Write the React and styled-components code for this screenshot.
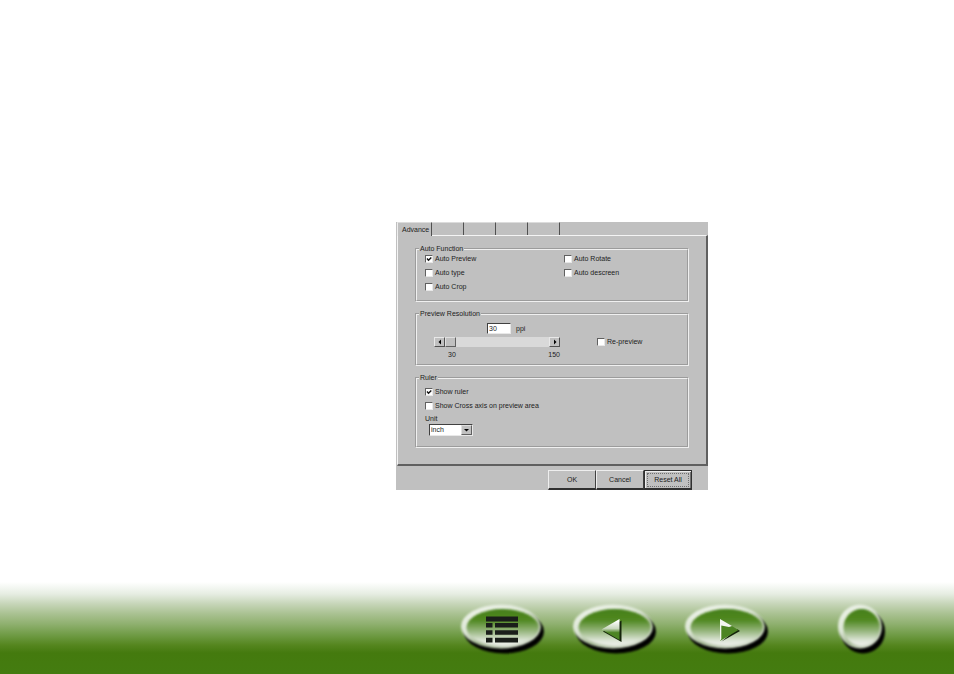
import React, { useState } from 'react';
import styled, { createGlobalStyle } from 'styled-components';

const GlobalStyle = createGlobalStyle`
  * {
    box-sizing: border-box;
  }

  body {
    margin: 0;
    background: #fff;
  }

  button, input, select {
    font: inherit;
    color: inherit;
    margin: 0;
    border-radius: 0;
  }
`;

const Page = styled.div`
  display: flex;
  flex-direction: column;
  min-height: 100vh;
`;

const Main = styled.main`
  flex: 1;
  padding: 222px 16px 16px 396px;
`;

const Dialog = styled.section`
  max-width: 312px;
  padding-left: 1px;
  background: #c0c0c0;
  color: #1c1c1c;
  font-family: 'Liberation Sans', Arial, sans-serif;
  font-size: 7px;
  line-height: 8px;
`;

const Tabs = styled.div`
  display: flex;
  height: 13px;
`;

const Tab = styled.button`
  width: ${({ $active }) => ($active ? '35px' : '32px')};
  height: ${({ $active }) => ($active ? '14px' : '13px')};
  padding: 0 0 0 4px;
  text-align: left;
  background: #c0c0c0;
  border: 0;
  border-top: 1px solid #dcdcdc;
  border-left: ${({ $active }) => ($active ? '1px solid #eee' : '0')};
  border-right: 1px solid #505050;
  position: relative;
`;

const Panel = styled.div`
  display: flex;
  flex-direction: column;
  gap: 8px;
  padding: 9px 17px 16px;
  border-top: 1px solid #f4f4f4;
  border-left: 1px solid #f4f4f4;
  border-right: 2px solid #606060;
  border-bottom: 2px solid #606060;
`;

const Group = styled.fieldset`
  margin: 0;
  min-width: 0;
  padding: ${({ $pad }) => $pad};
  border: 2px groove #f0f0f0;
`;

const Legend = styled.legend`
  padding: 0 1px;
  margin-left: -6px;
`;

const AutoGrid = styled.div`
  display: grid;
  grid-template-columns: 139px 1fr;
  grid-template-rows: repeat(3, 8px);
  grid-auto-flow: column;
  row-gap: 6px;
`;

const CheckLabel = styled.label`
  display: flex;
  align-items: center;
  gap: 2px;
  white-space: nowrap;
`;

const CheckBox = styled.span`
  display: grid;
  width: 8px;
  height: 8px;

  input, svg {
    grid-area: 1 / 1;
    width: 8px;
    height: 8px;
  }

  input {
    appearance: none;
    background: #fff;
    border: 1px solid #e8e8e8;
    border-top-color: #606060;
    border-left-color: #606060;
  }

  svg {
    pointer-events: none;
  }
`;

const ResolutionRow = styled.div`
  display: grid;
  grid-template-columns: 126px 1fr;
  column-gap: 37px;
  padding-left: 9px;
`;

const Resolution = styled.div`
  display: flex;
  flex-direction: column;
`;

const PpiField = styled.label`
  display: flex;
  align-items: center;
  gap: 5px;
  padding-left: 53px;
  margin-bottom: 3px;
`;

const PpiInput = styled.input`
  width: 24px;
  height: 11px;
  padding: 0 0 0 1px;
  background: #fff;
  border: 1px solid #e8e8e8;
  border-top-color: #404040;
  border-left-color: #404040;
`;

const ScrollBar = styled.div`
  display: flex;
  height: 10px;
  background: #d9d9d9;
`;

const ArrowButton = styled.button`
  display: grid;
  place-items: center;
  width: 11px;
  height: 10px;
  padding: 0;
  background: #c0c0c0;
  border: 1px solid #e8e8e8;
  border-right-color: #505050;
  border-bottom-color: #505050;
`;

const Range = styled.input`
  flex: 1;
  min-width: 0;
  height: 10px;
  appearance: none;
  background: transparent;

  &::-webkit-slider-thumb {
    appearance: none;
    width: 11px;
    height: 10px;
    background: #c0c0c0;
    border: 1px solid #e0e0e0;
    border-right-color: #606060;
    border-bottom-color: #606060;
  }
`;

const Scale = styled.div`
  display: flex;
  justify-content: space-between;
  margin-top: 4px;
  padding-left: 14px;
`;

const RePreview = styled.div`
  padding-top: 15px;
`;

const RulerOptions = styled.div`
  display: flex;
  flex-direction: column;
  gap: 6px;
`;

const UnitField = styled.label`
  display: block;
  margin-top: 5px;
`;

const SelectBox = styled.span`
  display: block;
  position: relative;
  width: 44px;
  height: 12px;
  margin: 1px 0 0 4px;

  select {
    display: block;
    width: 100%;
    height: 100%;
    padding: 0 0 0 1px;
    appearance: none;
    background: #fff;
    border: 1px solid #e8e8e8;
    border-top-color: #404040;
    border-left-color: #404040;
  }
`;

const SelectArrow = styled.span`
  position: absolute;
  top: 1px;
  right: 1px;
  display: grid;
  place-items: center;
  width: 11px;
  height: 10px;
  background: #c0c0c0;
  border: 1px solid #e0e0e0;
  border-right-color: #606060;
  border-bottom-color: #606060;
  pointer-events: none;
`;

const Actions = styled.div`
  display: flex;
  justify-content: flex-end;
  padding: 4px 16px 0 0;
`;

const ActionButton = styled.button`
  width: 48px;
  height: 20px;
  padding: 0;
  background: #c0c0c0;
  border: 1px solid #eee;
  border-right-color: #404040;
  border-bottom: 2px solid #303030;
  outline: ${({ $focused }) => ($focused ? '1px dotted #707070' : 'none')};
  outline-offset: -4px;
  ${({ $focused }) => $focused && 'border-color: #303030; box-shadow: inset 1px 1px #eee, inset -1px 0 #707070;'}
`;

const Footer = styled.footer`
  display: flex;
  justify-content: flex-end;
  gap: 28px;
  height: 92px;
  padding: 21px 67px 0 16px;
  background: linear-gradient(
    #fff 0,
    #e6ede2 12px,
    #c6d5b8 22px,
    #a9c191 32px,
    #8fb06f 42px,
    #6f9b45 53px,
    #55861f 63px,
    #447a0e 71px,
    #447c10 92px
  );
`;

const NavButton = styled.button`
  height: 52px;
  padding: 0;
  border: 0;
  background: none;
  margin-left: ${({ $apart }) => ($apart ? '41px' : '0')};

  svg {
    display: block;
    overflow: visible;
  }
`;

const Check = ({ children, defaultChecked = false }) => {
  const [checked, setChecked] = useState(defaultChecked);

  return (
    <CheckLabel>
      <CheckBox>
        <input type="checkbox" checked={checked} onChange={(e) => setChecked(e.target.checked)} />
        {checked && (
          <svg viewBox="0 0 8 8">
            <path d="M2 3.5 L3.5 5.2 L6.3 2.4" fill="none" stroke="#111" strokeWidth="1.4" />
          </svg>
        )}
      </CheckBox>
      {children}
    </CheckLabel>
  );
};

// Embossed glass button, drawn as an ellipse of the given half width
const Orb = ({ id, width, rx, children }) => (
  <svg width={width} height="52" viewBox={`0 0 ${width} 52`}>
    <defs>
      <linearGradient id={`${id}-rim`} x1="0.2" y1="0" x2="0.8" y2="1">
        <stop offset="0" stopColor="#eef3ea" />
        <stop offset="0.4" stopColor="#dbe5d4" />
        <stop offset="0.65" stopColor="#a5b895" />
        <stop offset="1" stopColor="#dde3d8" />
      </linearGradient>
      <linearGradient id={`${id}-face`} x1="0" y1="0" x2="0" y2="1">
        <stop offset="0" stopColor="#46801a" />
        <stop offset="0.3" stopColor="#508821" />
        <stop offset="0.6" stopColor="#97b67f" />
        <stop offset="0.85" stopColor="#dde5d7" />
        <stop offset="1" stopColor="#eef0ec" />
      </linearGradient>
      <filter id={`${id}-soft`} x="-10%" y="-10%" width="120%" height="120%">
        <feGaussianBlur stdDeviation="1" />
      </filter>
      <filter id={`${id}-edge`} x="-10%" y="-10%" width="120%" height="120%">
        <feGaussianBlur stdDeviation="0.8" />
      </filter>
    </defs>
    <ellipse cx={rx + 4} cy="28.5" rx={rx} ry="22" fill="#000" filter={`url(#${id}-soft)`} />
    <ellipse cx={rx + 1} cy="23.5" rx={rx} ry="22" fill={`url(#${id}-rim)`} filter={`url(#${id}-edge)`} />
    <ellipse cx={rx + 2.5} cy="24.5" rx={rx - 4} ry="18.5" fill={`url(#${id}-face)`} filter={`url(#${id}-edge)`} />
    {children}
  </svg>
);

const App = () => {
  const [ppi, setPpi] = useState(30);

  return (
    <>
      <GlobalStyle />
      <Page>
        <Main>
          <Dialog>
            <Tabs>
              <Tab $active>Advance</Tab>
              <Tab aria-label="Tab 2" />
              <Tab aria-label="Tab 3" />
              <Tab aria-label="Tab 4" />
              <Tab aria-label="Tab 5" />
            </Tabs>
            <Panel>
              <Group $pad="2px 8px 9px">
                <Legend>Auto Function</Legend>
                <AutoGrid>
                  <Check defaultChecked>Auto Preview</Check>
                  <Check>Auto type</Check>
                  <Check>Auto Crop</Check>
                  <Check>Auto Rotate</Check>
                  <Check>Auto descreen</Check>
                </AutoGrid>
              </Group>
              <Group $pad="5px 8px 5px">
                <Legend>Preview Resolution</Legend>
                <ResolutionRow>
                  <Resolution>
                    <PpiField>
                      <PpiInput value={ppi} onChange={(e) => setPpi(e.target.value)} />
                      ppi
                    </PpiField>
                    <ScrollBar>
                      <ArrowButton aria-label="Decrease" onClick={() => setPpi(Math.max(30, Number(ppi) - 1))}>
                        <svg width="6" height="6" viewBox="0 0 6 6"><path d="M4 0.5 V5.5 L1.5 3 Z" /></svg>
                      </ArrowButton>
                      <Range
                        type="range"
                        aria-label="Preview Resolution"
                        min="30"
                        max="150"
                        value={ppi}
                        onChange={(e) => setPpi(e.target.value)}
                      />
                      <ArrowButton aria-label="Increase" onClick={() => setPpi(Math.min(150, Number(ppi) + 1))}>
                        <svg width="6" height="6" viewBox="0 0 6 6"><path d="M2 0.5 V5.5 L4.5 3 Z" /></svg>
                      </ArrowButton>
                    </ScrollBar>
                    <Scale>
                      <span>30</span>
                      <span>150</span>
                    </Scale>
                  </Resolution>
                  <RePreview>
                    <Check>Re-preview</Check>
                  </RePreview>
                </ResolutionRow>
              </Group>
              <Group $pad="6px 8px 10px">
                <Legend>Ruler</Legend>
                <RulerOptions>
                  <Check defaultChecked>Show ruler</Check>
                  <Check>Show Cross axis on preview area</Check>
                </RulerOptions>
                <UnitField>
                  Unit
                  <SelectBox>
                    <select defaultValue="inch">
                      <option value="inch">inch</option>
                    </select>
                    <SelectArrow>
                      <svg width="7" height="6" viewBox="0 0 7 6"><path d="M1 2 H6 L3.5 4.5 Z" /></svg>
                    </SelectArrow>
                  </SelectBox>
                </UnitField>
              </Group>
            </Panel>
            <Actions>
              <ActionButton>OK</ActionButton>
              <ActionButton>Cancel</ActionButton>
              <ActionButton $focused>Reset All</ActionButton>
            </Actions>
          </Dialog>
        </Main>
        <Footer>
          <NavButton aria-label="Contents">
            <Orb id="menu" width={84} rx={40}>
              <path
                d="M26 13.5h32v5H26z M26 20h6.5v4.5H26z M35 20h23v4.5H35z M26 27.3h6.5v4.5H26z M35 27.3h23v4.5H35z M26 34.7h6.5v4.7H26z M35 34.7h23v4.7H35z"
                fill="#1a1e1a"
              />
            </Orb>
          </NavButton>
          <NavButton aria-label="Previous">
            <Orb id="prev" width={84} rx={40}>
              <defs>
                <linearGradient id="prev-arrow" x1="0" y1="0" x2="0" y2="1">
                  <stop offset="0.1" stopColor="#fff" />
                  <stop offset="0.45" stopColor="#c9d8be" />
                  <stop offset="0.65" stopColor="#4c8423" />
                </linearGradient>
              </defs>
              <path d="M31 28.5 L49.5 17.5 V39 Z" fill="#14240a" />
              <path d="M29.5 26.5 L47.5 16 V37 Z" fill="url(#prev-arrow)" />
            </Orb>
          </NavButton>
          <NavButton aria-label="Next">
            <Orb id="next" width={84} rx={40}>
              <path d="M37.5 38.5 L56 28 L53 26 Z" fill="#14240a" />
              <path d="M36 16 V38 L54.5 27 Z" fill="#4c8423" />
              <path d="M36 16 L48 23 L45 24 L37.3 22.5 V36 L36 38 Z" fill="#f3f6f1" />
            </Orb>
          </NavButton>
          <NavButton $apart aria-label="Exit">
            <Orb id="exit" width={50} rx={22} />
          </NavButton>
        </Footer>
      </Page>
    </>
  );
};

export default App;
